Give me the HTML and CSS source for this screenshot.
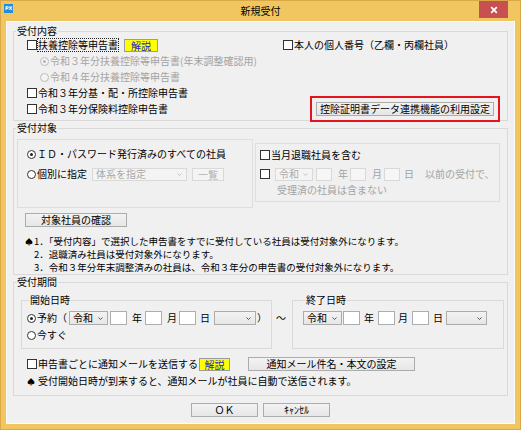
FILE: index.html
```html
<!DOCTYPE html>
<html lang="ja">
<head>
    <meta charset="UTF-8">
    <title>新規受付</title>
    <link rel="stylesheet" href="styles.css">
</head>
<body>
<div class="window">
    <div class="titlebar">
        <span class="app-icon">PX</span>
        <span class="title">新規受付</span>
        <span class="close-btn">
            <svg width="8" height="8" viewBox="0 0 8 8"><path d="M1.2 1.2L6.8 6.8M6.8 1.2L1.2 6.8" stroke="#fff" stroke-width="1.7"/></svg>
        </span>
    </div>

    <div class="client">
        <!-- 受付内容 -->
        <fieldset class="group">
            <legend>受付内容</legend>
            <div class="content-grid">
                <div class="row">
                    <span class="check"></span>
                    <span class="label focus-label">扶養控除等申告書</span>
                    <span class="help help-first">解説</span>
                </div>
                <div class="row">
                    <span class="check"></span>
                    <span class="label">本人の個人番号（乙欄・丙欄社員）</span>
                </div>
                <div class="row span-2 indent">
                    <span class="radio checked disabled"></span>
                    <span class="label muted">令和３年分扶養控除等申告書(年末調整確認用)</span>
                </div>
                <div class="row span-2 indent">
                    <span class="radio disabled"></span>
                    <span class="label muted">令和４年分扶養控除等申告書</span>
                </div>
                <div class="row span-2">
                    <span class="check"></span>
                    <span class="label">令和３年分基・配・所控除申告書</span>
                </div>
                <div class="row">
                    <span class="check"></span>
                    <span class="label">令和３年分保険料控除申告書</span>
                </div>
                <div class="row">
                    <button class="btn btn-link-setting">控除証明書データ連携機能の利用設定</button>
                </div>
            </div>
        </fieldset>

        <!-- 受付対象 -->
        <fieldset class="group group-target">
            <legend>受付対象</legend>
            <div class="target-panels">
                <div class="panel panel-left">
                    <div class="panel-row">
                        <span class="radio checked"></span>
                        <span class="label">ＩＤ・パスワード発行済みのすべての社員</span>
                    </div>
                    <div class="panel-row">
                        <span class="radio"></span>
                        <span class="label">個別に指定</span>
                        <span class="combo disabled combo-system">
                            <span>体系を指定</span>
                            <svg width="5" height="3" viewBox="0 0 5 3"><polyline points="0.5,0.5 2.5,2.5 4.5,0.5" fill="none" stroke="#c4c4c4"/></svg>
                        </span>
                        <button class="btn disabled btn-list">一覧</button>
                    </div>
                </div>
                <div class="panel panel-right">
                    <div class="retire-row">
                        <span class="check"></span>
                        <span class="label">当月退職社員を含む</span>
                    </div>
                    <div class="retire-row retire-date">
                        <span class="check"></span>
                        <span class="combo disabled combo-era-small">
                            <span>令和</span>
                            <svg width="5" height="3" viewBox="0 0 5 3"><polyline points="0.5,0.5 2.5,2.5 4.5,0.5" fill="none" stroke="#c4c4c4"/></svg>
                        </span>
                        <span class="field disabled f-year"></span>
                        <span class="label muted u-year">年</span>
                        <span class="field disabled f-next"></span>
                        <span class="label muted u-month">月</span>
                        <span class="field disabled f-next"></span>
                        <span class="label muted u-day">日</span>
                        <span class="label muted u-before">以前の受付で、</span>
                    </div>
                    <div class="retire-row retire-note">
                        <span class="label muted">受理済の社員は含まない</span>
                    </div>
                </div>
            </div>

            <button class="btn btn-confirm">対象社員の確認</button>

            <div class="notes">
                <span class="spade">♠</span>
                <div class="note-lines">
                    <div>1．「受付内容」で選択した申告書をすでに受付している社員は受付対象外になります。</div>
                    <div>2．退職済み社員は受付対象外になります。</div>
                    <div>3．令和３年分年末調整済みの社員は、令和３年分の申告書の受付対象外になります。</div>
                </div>
            </div>
        </fieldset>

        <!-- 受付期間 -->
        <fieldset class="group group-period">
            <legend>受付期間</legend>
            <div class="period-boxes">
                <fieldset class="subgroup sub-start">
                    <legend>開始日時</legend>
                    <div class="date-row">
                        <span class="radio checked"></span>
                        <span class="label">予約</span>
                        <span class="label paren">（</span>
                        <span class="combo combo-era">
                            <span>令和</span>
                            <svg width="5" height="3" viewBox="0 0 5 3"><polyline points="0.5,0.5 2.5,2.5 4.5,0.5" fill="none" stroke="#555"/></svg>
                        </span>
                        <span class="field s-year"></span>
                        <span class="label s-unit-year">年</span>
                        <span class="field s-month"></span>
                        <span class="label s-unit-month">月</span>
                        <span class="field s-day"></span>
                        <span class="label s-unit-day">日</span>
                        <span class="combo combo-time">
                            <span></span>
                            <svg width="5" height="3" viewBox="0 0 5 3"><polyline points="0.5,0.5 2.5,2.5 4.5,0.5" fill="none" stroke="#555"/></svg>
                        </span>
                        <span class="label paren-close">）</span>
                    </div>
                    <div class="date-row now-row">
                        <span class="radio"></span>
                        <span class="label">今すぐ</span>
                    </div>
                </fieldset>

                <span class="tilde">～</span>

                <fieldset class="subgroup sub-end">
                    <legend>終了日時</legend>
                    <div class="date-row">
                        <span class="combo combo-era">
                            <span>令和</span>
                            <svg width="5" height="3" viewBox="0 0 5 3"><polyline points="0.5,0.5 2.5,2.5 4.5,0.5" fill="none" stroke="#555"/></svg>
                        </span>
                        <span class="field e-year"></span>
                        <span class="label e-unit-year">年</span>
                        <span class="field e-month"></span>
                        <span class="label e-unit-month">月</span>
                        <span class="field e-day"></span>
                        <span class="label e-unit-day">日</span>
                        <span class="combo combo-time e-time">
                            <span></span>
                            <svg width="5" height="3" viewBox="0 0 5 3"><polyline points="0.5,0.5 2.5,2.5 4.5,0.5" fill="none" stroke="#555"/></svg>
                        </span>
                    </div>
                </fieldset>
            </div>

            <div class="mail-row">
                <span class="check"></span>
                <span class="label">申告書ごとに通知メールを送信する</span>
                <span class="help help-second">解説</span>
                <button class="btn btn-mail">通知メール件名・本文の設定</button>
            </div>
            <div class="mail-note">
                <span class="spade">♠</span>
                <span class="label">受付開始日時が到来すると、通知メールが社員に自動で送信されます。</span>
            </div>
        </fieldset>

        <div class="dialog-buttons">
            <button class="btn btn-dialog">ＯＫ</button>
            <button class="btn btn-dialog">ｷｬﾝｾﾙ</button>
        </div>
    </div>
</div>
</body>
</html>
```

FILE: styles.css
```css
/* Page */
html, body {
    margin: 0;
    padding: 0;
}
body {
    font-family: "Noto Sans CJK JP", "Noto Sans", sans-serif;
    font-size: 10px;
    color: #000;
    background-color: #f1c55f;
}

/* Window frame */
.window {
    width: 521px;
    height: 430px;
    box-sizing: border-box;
    border: 1px solid #d9a847;
    background-color: #f1c55f;
    display: flex;
    flex-direction: column;
}
.titlebar {
    height: 20px;
    display: grid;
    grid-template-columns: 1fr auto 1fr;
    align-items: start;
}
.app-icon {
    justify-self: start;
    width: 9px;
    height: 9px;
    margin: 3px 0 0 3px;
    background-color: #1f8fd8;
    color: #fff;
    font-family: "DejaVu Sans", sans-serif;
    font-size: 5px;
    font-weight: bold;
    line-height: 9px;
    text-align: center;
    letter-spacing: -0.3px;
}
.title {
    line-height: 20px;
    font-size: 10px;
}
.close-btn {
    justify-self: end;
    width: 29px;
    height: 17px;
    margin-right: 12px;
    background-color: #c75050;
    display: flex;
    align-items: center;
    justify-content: center;
}

/* Client area */
.client {
    flex: 1;
    margin: 0 5px 5px;
    border: 1px solid #fbfbfb;
    background-color: #f0f0f0;
    padding: 3px 6px 0;
}

/* Group boxes */
.group, .subgroup {
    margin: 0;
    padding: 0;
    min-width: 0;
    border: 1px solid #d9d9d9;
}
.group legend, .subgroup legend {
    margin-left: 2px;
    padding: 0 1px;
    line-height: 12px;
}
.group-target {
    margin-top: 1px;
}
.group-period {
    margin-top: 1px;
    padding-bottom: 7px;
}

/* Common controls */
.label {
    line-height: 12px;
    white-space: nowrap;
}
.muted {
    color: #a3a3a3;
}
.check {
    flex: none;
    width: 10px;
    height: 10px;
    box-sizing: border-box;
    border: 1px solid #333;
    background-color: #fff;
    margin-right: 1px;
}
.radio {
    flex: none;
    width: 9px;
    height: 9px;
    box-sizing: border-box;
    border: 1px solid #333;
    border-radius: 50%;
    background-color: #fff;
    margin-right: 1px;
    display: flex;
    align-items: center;
    justify-content: center;
}
.radio.checked::after {
    content: "";
    width: 3px;
    height: 3px;
    border-radius: 50%;
    background-color: #222;
}
.radio.disabled {
    border-color: #bcbcbc;
    background-color: #f4f4f4;
}
.radio.disabled.checked::after {
    background-color: #b5b5b5;
}
.btn {
    font-family: inherit;
    font-size: 10px;
    color: #000;
    height: 14px;
    margin: 0;
    padding: 0;
    box-sizing: border-box;
    border: 1px solid #acacac;
    background: linear-gradient(#f3f3f3, #e6e6e6);
    line-height: 12px;
    white-space: nowrap;
}
.btn.disabled {
    color: #b0b0b0;
    border-color: #d9d9d9;
    background: #f4f4f4;
}
.help {
    height: 13px;
    box-sizing: border-box;
    border: 1px solid #9c9c9c;
    background-color: #ffff00;
    color: #2222d4;
    line-height: 11px;
    text-align: center;
}
.combo {
    display: flex;
    align-items: center;
    justify-content: space-between;
    box-sizing: border-box;
    height: 14px;
    padding: 0 4px 0 3px;
    border: 1px solid #acacac;
    background: linear-gradient(#f3f3f3, #e6e6e6);
    line-height: 12px;
    white-space: nowrap;
}
.combo.disabled {
    height: 13px;
    color: #a9a9a9;
    border-color: #d9d9d9;
    background: #f4f4f4;
}
.field {
    flex: none;
    width: 17px;
    height: 14px;
    box-sizing: border-box;
    border: 1px solid #abadb3;
    background-color: #fff;
}
.field.disabled {
    width: 16px;
    height: 13px;
    border-color: #d9d9d9;
    background-color: #f6f6f6;
}

/* 受付内容 */
.content-grid {
    display: grid;
    grid-template-columns: 256px 1fr;
    grid-auto-rows: 16px;
    padding: 0 0 3px 13px;
}
.row {
    display: flex;
    align-items: center;
}
.span-2 {
    grid-column: 1 / 3;
}
.indent {
    padding-left: 13px;
}
.focus-label {
    outline: 1px dotted #222;
    outline-offset: 0;
}
.help-first {
    width: 34px;
    margin-left: 6px;
}
.btn-link-setting {
    width: 178px;
    margin-left: 33px;
    outline: 2px solid #e3141b;
    outline-offset: 4px;
}

/* 受付対象 */
.target-panels {
    display: flex;
    align-items: flex-start;
    margin-top: 5px;
}
.panel {
    box-sizing: border-box;
    border: 1px solid #dedede;
}
.panel-left {
    width: 236px;
    height: 69px;
    margin-left: 3px;
    padding: 4px 0 0 9px;
}
.panel-row {
    height: 20px;
    display: flex;
    align-items: center;
}
.combo-system {
    width: 95px;
    margin-left: 5px;
}
.btn-list {
    width: 32px;
    height: 13px;
    margin-left: 5px;
}
.panel-right {
    width: 245px;
    height: 59px;
    margin: 4px 0 0 2px;
    padding: 3px 0 0 4px;
}
.retire-row {
    height: 16px;
    display: flex;
    align-items: center;
}
.retire-date {
    height: 18px;
    margin-top: 2px;
}
.retire-note {
    height: 14px;
    padding-left: 17px;
}
.combo-era-small {
    width: 38px;
    margin-left: 4px;
}
.f-year {
    margin-left: 3px;
}
.u-year {
    margin: 0 2px 0 6px;
}
.u-month {
    margin: 0 2px 0 6px;
}
.u-day {
    margin-left: 4px;
}
.u-before {
    margin-left: 11px;
}
.btn-confirm {
    display: block;
    width: 102px;
    margin: 5px 0 0 11px;
}
.notes {
    display: flex;
    margin-top: 8px;
    padding-left: 11px;
    font-size: 9.5px;
    line-height: 13px;
}
.spade {
    flex: none;
    width: 8px;
    font-size: 8px;
}
.notes .spade {
    margin-right: 1px;
}
.note-lines div {
    white-space: nowrap;
}

/* 受付期間 */
.period-boxes {
    display: flex;
    align-items: flex-start;
    margin-top: 6px;
    padding-left: 7px;
}
.subgroup {
    box-sizing: border-box;
    padding-bottom: 5px;
}
.sub-start {
    width: 251px;
    padding-left: 5px;
}
.sub-end {
    width: 212px;
    height: 55px;
    padding-left: 10px;
}
.tilde {
    width: 18px;
    margin-top: 18px;
    line-height: 12px;
    text-align: center;
}
.date-row {
    height: 16px;
    margin-top: 4px;
    display: flex;
    align-items: center;
}
.now-row {
    margin-top: 1px;
}
.paren {
    width: 10px;
}
.combo-era {
    width: 39px;
    margin-left: 2px;
}
.s-year {
    margin-left: 2px;
}
.s-unit-year {
    margin: 0 3px 0 5px;
}
.s-unit-month {
    margin: 0 2px 0 5px;
}
.s-unit-day {
    margin-left: 4px;
}
.combo-time {
    width: 42px;
    margin-left: 4px;
}
.paren-close {
    width: 10px;
    margin-left: 1px;
}
.sub-end {
    margin-left: 2px;
}
.sub-end .combo-era {
    margin-left: 0;
}
.e-year {
    margin-left: 1px;
}
.e-unit-year {
    margin: 0 4px 0 4px;
}
.e-unit-month {
    margin: 0 4px 0 3px;
}
.e-unit-day {
    margin-left: 4px;
}
.e-time {
    width: 41px;
    margin-left: 3px;
}
.mail-row {
    height: 16px;
    margin-top: 7px;
    padding-left: 13px;
    display: flex;
    align-items: center;
}
.help-second {
    width: 31px;
    margin-left: 1px;
}
.btn-mail {
    width: 167px;
    margin-left: 18px;
}
.mail-note {
    height: 14px;
    margin-top: 2px;
    padding-left: 13px;
    display: flex;
    align-items: center;
}
.mail-note .spade {
    width: 11px;
}

/* Dialog buttons */
.dialog-buttons {
    display: flex;
    justify-content: center;
    gap: 5px;
    margin-top: 7px;
}
.btn-dialog {
    width: 67px;
}
```
